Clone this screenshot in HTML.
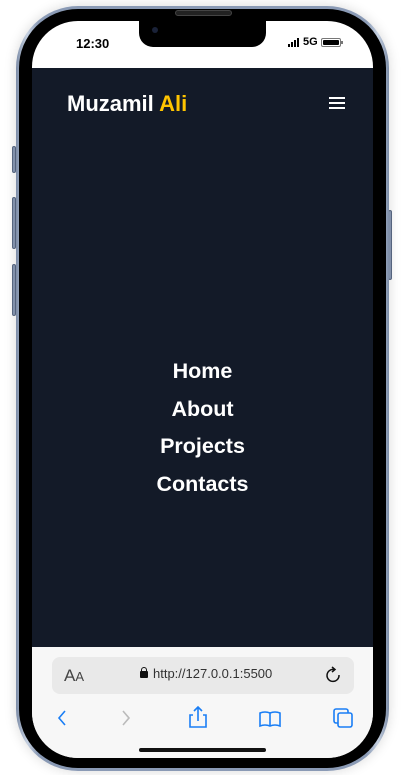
<!DOCTYPE html>
<html><head><style>
*{margin:0;padding:0;box-sizing:border-box}
body{width:404px;height:775px;background:#fff;position:relative;overflow:hidden;font-family:"Liberation Sans",sans-serif}
.btn{position:absolute;background:#8a9ab5;border:1px solid #5a6a85;border-radius:2px;width:4px}
.frame{position:absolute;left:16px;top:6px;width:373px;height:765px;border-radius:62px;background:linear-gradient(90deg,#7d8da8,#c5d0e0 3%,#8a9ab5 6%,#8a9ab5 94%,#c5d0e0 97%,#7d8da8);box-shadow:0 0 12px rgba(0,0,0,.15)}
.bezel{position:absolute;left:19px;top:9px;width:367px;height:759px;border-radius:59px;background:#000}
.screen{position:absolute;left:32px;top:21px;width:341px;height:737px;border-radius:46px;background:#fff;overflow:hidden}
.notch{position:absolute;left:139px;top:18px;width:127px;height:29px;background:#000;border-radius:0 0 14px 14px}
.spk{position:absolute;left:175px;top:10px;width:57px;height:6px;background:#222;border-radius:3px;border:1px solid #444}
.dark{position:absolute;left:0;top:47px;width:341px;height:579px;background:#131a28}
.bar{position:absolute;left:0;top:626px;width:341px;height:111px;background:#f7f7f7}
</style></head><body>
<div class="btn" style="left:12px;top:146px;height:27px"></div>
<div class="btn" style="left:12px;top:197px;height:52px"></div>
<div class="btn" style="left:12px;top:264px;height:52px"></div>
<div class="btn" style="left:388px;top:210px;height:70px"></div>
<div class="frame"></div>
<div class="bezel"></div>
<div class="screen">
  <div style="position:absolute;left:44px;top:15px;font-weight:bold;font-size:13px">12:30</div>
  <div style="position:absolute;left:256px;top:17px;display:flex;align-items:flex-end;gap:1px">
    <span style="width:2px;height:3px;background:#000"></span><span style="width:2px;height:5px;background:#000"></span><span style="width:2px;height:7px;background:#000"></span><span style="width:2px;height:9px;background:#000"></span>
  </div>
  <div style="position:absolute;left:271px;top:15px;font-weight:bold;font-size:11px">5G</div>
  <div style="position:absolute;left:289px;top:17px;width:20px;height:9px;border:1px solid #777;border-radius:2px;padding:1px"><div style="background:#000;height:100%;border-radius:1px"></div></div>
  <div style="position:absolute;left:309px;top:20px;width:1.5px;height:3px;background:#777"></div>
  <div class="dark">
    <div style="position:absolute;left:35px;top:23px;font-weight:bold;font-size:22px;color:#fff">Muzamil <span style="color:#ffc400">Ali</span></div>
    <div style="position:absolute;left:297px;top:29px;width:16px">
      <div style="height:2px;background:#fff;margin-bottom:3px"></div><div style="height:2px;background:#fff;margin-bottom:3px"></div><div style="height:2px;background:#fff"></div>
    </div>
    <div style="position:absolute;left:0;width:341px;top:285px;text-align:center;color:#fff;font-weight:bold;font-size:21.5px;line-height:37.7px">Home<br>About<br>Projects<br>Contacts</div>
  </div>
  <div class="bar">
    <div style="position:absolute;left:20px;top:10px;width:302px;height:37px;background:#e9e9e9;border-radius:8px"></div>
    <div style="position:absolute;left:32px;top:19px;font-size:17px;color:#444">A<span style="font-size:13px">A</span></div>
    <div style="position:absolute;left:108px;top:24px;width:8px;height:7px;background:#111;border-radius:1px"></div>
    <div style="position:absolute;left:109px;top:20px;width:6px;height:6px;border:1.5px solid #111;border-bottom:none;border-radius:3px 3px 0 0"></div>
    <div style="position:absolute;left:121px;top:19px;font-size:13px;color:#333">http://127.0.0.1:5500</div>
    <svg style="position:absolute;left:293px;top:19px" width="16" height="18" viewBox="0 0 16 18"><path d="M9 3.5A6 6 0 1 0 14 9" fill="none" stroke="#111" stroke-width="1.5"/><path d="M7 1l3 2.5-3 2.5" fill="none" stroke="#111" stroke-width="1.5"/></svg>
    <svg style="position:absolute;left:0;top:56px" width="341" height="30" viewBox="0 0 341 30">
      <path d="M33 8l-6 7 6 7" fill="none" stroke="#1a7ef5" stroke-width="1.6"/>
      <path d="M91 8l6 7-6 7" fill="none" stroke="#bbb" stroke-width="1.6"/>
      <path d="M161 12h-3v12h16v-12h-3M166 4v14M162 8l4-4 4 4" fill="none" stroke="#1a7ef5" stroke-width="1.6"/>
      <path d="M228 10q5-2 10 0q5-2 10 0v13q-5-2-10 0q-5-2-10 0zM238 10v13" fill="none" stroke="#1a7ef5" stroke-width="1.6"/>
      <rect x="302" y="6" width="14" height="14" rx="2" fill="none" stroke="#1a7ef5" stroke-width="1.6"/>
      <rect x="306" y="10" width="14" height="14" rx="2" fill="#f7f7f7" stroke="#1a7ef5" stroke-width="1.6"/>
    </svg>
    <div style="position:absolute;left:107px;top:101px;width:127px;height:4px;background:#111;border-radius:2px"></div>
  </div>
</div>
<div class="notch"></div>
<div class="spk"></div>
<div style="position:absolute;left:152px;top:27px;width:6px;height:6px;border-radius:3px;background:#1a2238"></div>
</body></html>
